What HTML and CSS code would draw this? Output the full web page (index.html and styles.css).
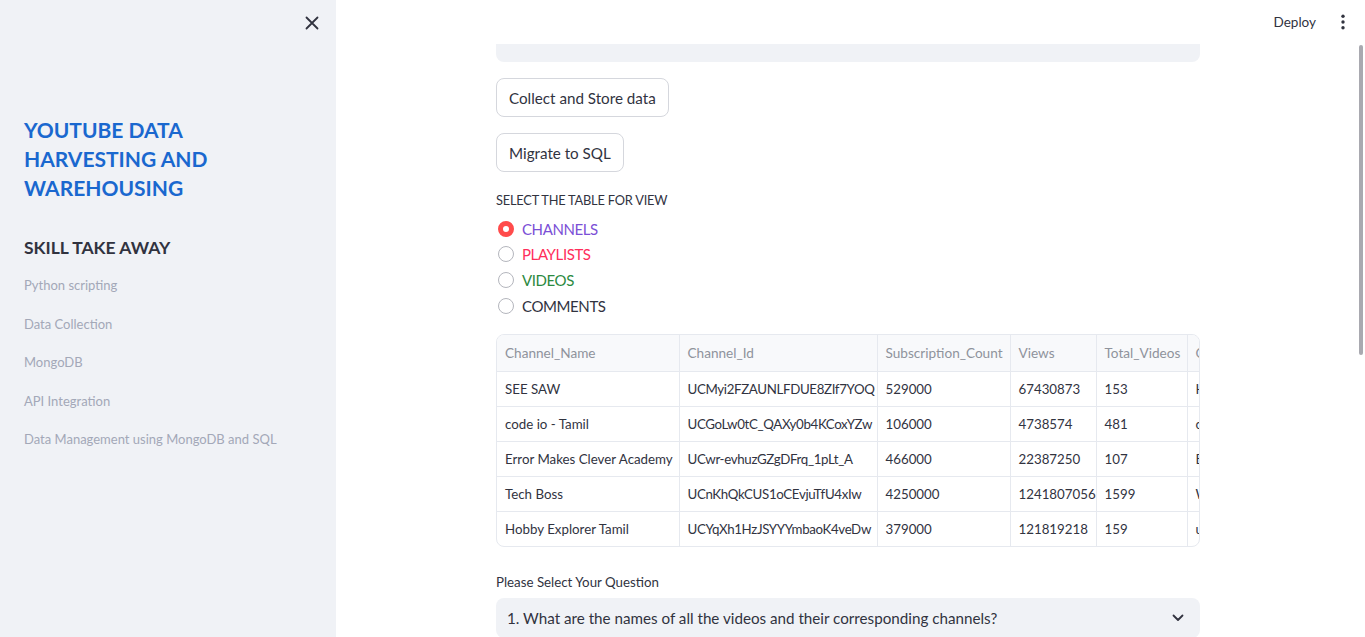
FILE: index.html
```html
<!DOCTYPE html>
<html>
<head>
<meta charset="utf-8">
<link rel="stylesheet" href="styles.css">
</head>
<body>
<aside class="sidebar">
  <div class="side-top">
    <svg class="close" width="14" height="14" viewBox="0 0 14 14"><path d="M1.5 1.5L12.5 12.5M12.5 1.5L1.5 12.5" stroke="#31333f" stroke-width="1.8" stroke-linecap="round"/></svg>
  </div>
  <h1 class="app-title">YOUTUBE DATA HARVESTING AND WAREHOUSING</h1>
  <h2 class="skill">SKILL TAKE AWAY</h2>
  <ul class="skills">
    <li>Python scripting</li>
    <li>Data Collection</li>
    <li>MongoDB</li>
    <li>API Integration</li>
    <li>Data Management using MongoDB and SQL</li>
  </ul>
</aside>
<main class="main">
  <header class="topbar">
    <span class="deploy">Deploy</span>
    <svg class="kebab" width="6" height="16" viewBox="0 0 6 16"><circle cx="3" cy="2.2" r="1.7" fill="#31333f"/><circle cx="3" cy="8" r="1.7" fill="#31333f"/><circle cx="3" cy="13.8" r="1.7" fill="#31333f"/></svg>
  </header>
  <div class="scroll-thumb"></div>
  <div class="content">
    <div class="input-stub"></div>
    <button class="btn">Collect and Store data</button>
    <button class="btn">Migrate to SQL</button>
    <div class="label">SELECT THE TABLE FOR VIEW</div>
    <div class="radios">
      <label class="radio"><span class="dot checked"></span><span class="violet">CHANNELS</span></label>
      <label class="radio"><span class="dot"></span><span class="red">PLAYLISTS</span></label>
      <label class="radio"><span class="dot"></span><span class="green">VIDEOS</span></label>
      <label class="radio"><span class="dot"></span><span>COMMENTS</span></label>
    </div>
    <div class="table-wrap">
      <table class="grid">
        <colgroup>
          <col class="c1"><col class="c2"><col class="c3"><col class="c4"><col class="c5"><col class="c6">
        </colgroup>
        <thead>
          <tr><th>Channel_Name</th><th>Channel_Id</th><th>Subscription_Count</th><th>Views</th><th>Total_Videos</th><th>Channel_Description</th></tr>
        </thead>
        <tbody>
          <tr><td>SEE SAW</td><td class="cid">UCMyi2FZAUNLFDUE8ZIf7YOQ</td><td>529000</td><td>67430873</td><td>153</td><td>Hello friends</td></tr>
          <tr><td>code io - Tamil</td><td class="cid">UCGoLw0tC_QAXy0b4KCoxYZw</td><td>106000</td><td>4738574</td><td>481</td><td>code io</td></tr>
          <tr><td>Error Makes Clever Academy</td><td class="cid">UCwr-evhuzGZgDFrq_1pLt_A</td><td>466000</td><td>22387250</td><td>107</td><td>Error Makes Clever</td></tr>
          <tr><td>Tech Boss</td><td class="cid">UCnKhQkCUS1oCEvjuTfU4xIw</td><td>4250000</td><td>1241807056</td><td>1599</td><td>Welcome</td></tr>
          <tr><td>Hobby Explorer Tamil</td><td class="cid">UCYqXh1HzJSYYYmbaoK4veDw</td><td>379000</td><td>121819218</td><td>159</td><td>unboxing</td></tr>
        </tbody>
      </table>
    </div>
    <div class="label q-label">Please Select Your Question</div>
    <div class="select">
      <span>1. What are the names of all the videos and their corresponding channels?</span>
      <svg width="12" height="8" viewBox="0 0 12 8"><path d="M1.5 1.5L6 6L10.5 1.5" stroke="#31333f" stroke-width="1.8" fill="none" stroke-linecap="round" stroke-linejoin="round"/></svg>
    </div>
  </div>
</main>
</body>
</html>
```
FILE: styles.css
```css
* { box-sizing: border-box; }
html, body { margin: 0; padding: 0; height: 637px; overflow: hidden; }
body {
  display: flex;
  font-family: "Lato", "Noto Sans", sans-serif;
  color: #31333f;
  background: #ffffff;
}
.sidebar {
  width: 336px;
  flex: 0 0 336px;
  height: 637px;
  background: #f0f2f6;
  padding: 0 24px;
}
.side-top {
  height: 46px;
  display: flex;
  justify-content: flex-end;
  align-items: center;
  margin-right: -7px;
}
.close { display: block; }
.app-title {
  margin: 69px 0 0 0;
  font-size: 21px;
  line-height: 29px;
  font-weight: 700;
  color: #1a68cf;
  width: 200px;
}
.skill {
  margin: 34px 0 0 0;
  font-size: 17.5px;
  line-height: 24px;
  font-weight: 700;
  color: #31333f;
}
.skills {
  list-style: none;
  margin: 15px 0 0 0;
  padding: 0;
}
.skills li {
  font-size: 13px;
  line-height: 20px;
  color: #a3a8b8;
  margin-bottom: 18.5px;
}
.main {
  flex: 1;
  position: relative;
  height: 637px;
}
.topbar {
  position: absolute;
  top: 0;
  right: 0;
  height: 44px;
  display: flex;
  align-items: center;
  padding-right: 19px;
  gap: 24px;
}
.deploy { font-size: 13.5px; color: #31333f; }
.kebab { display: block; }
.scroll-thumb {
  position: absolute;
  right: 2px;
  top: 45px;
  width: 4px;
  height: 310px;
  background: #a9a9b0;
  border-radius: 2px;
}
.content {
  margin-left: 160px;
  width: 704px;
  padding-top: 44px;
  display: flex;
  flex-direction: column;
  align-items: flex-start;
}
.input-stub {
  width: 100%;
  height: 18px;
  background: #f0f2f6;
  border-radius: 0 0 8px 8px;
}
.btn {
  margin-top: 16px;
  height: 39px;
  padding: 0 12px;
  font-family: inherit;
  font-size: 15.2px;
  color: #31333f;
  background: #ffffff;
  border: 1px solid #d5d7dd;
  border-radius: 8px;
}
.label {
  margin-top: 18px;
  font-size: 12.8px;
  letter-spacing: -0.2px;
  line-height: 20px;
  color: #31333f;
}
.radios {
  margin-top: 6px;
  display: flex;
  flex-direction: column;
}
.radio {
  display: flex;
  align-items: center;
  height: 25.6px;
  font-size: 15px;
  letter-spacing: -0.4px;
  gap: 8px;
}
.dot {
  width: 16px;
  height: 16px;
  border-radius: 50%;
  border: 1px solid #b4b6bd;
  background: #fff;
  margin-left: 2px;
}
.dot.checked {
  border: 5px solid #ff4b4b;
  background: #ffffff;
}
.violet { color: #7b4fd6; }
.red { color: #ff2e5b; }
.green { color: #2c8a3f; }
.table-wrap {
  margin-top: 16px;
  width: 100%;
  border: 1px solid #e6e9ef;
  border-radius: 8px;
  overflow: hidden;
}
.grid {
  border-collapse: collapse;
  table-layout: fixed;
  width: 900px;
}
.c1 { width: 182px; }
.c2 { width: 198px; }
.c3 { width: 133px; }
.c4 { width: 86px; }
.c5 { width: 91px; }
.c6 { width: 210px; }
.grid th, .grid td {
  height: 35px;
  padding: 0 8px;
  font-size: 13.3px;
  text-align: left;
  white-space: nowrap;
  overflow: hidden;
  border-right: 1px solid #e6e9ef;
  border-bottom: 1px solid #e6e9ef;
}
.grid th {
  height: 36px;
  font-weight: 400;
  font-size: 13.6px;
  color: #8f939c;
  background: #f8f9fb;
}
.grid td { color: #31333f; }
.grid td.cid { letter-spacing: -0.35px; }
.grid tbody tr:last-child td { border-bottom: none; }
.q-label { margin-top: 25px; font-size: 13.3px; letter-spacing: 0; }
.select {
  margin-top: 6px;
  width: 100%;
  height: 40px;
  background: #f0f2f6;
  border-radius: 8px;
  display: flex;
  align-items: center;
  justify-content: space-between;
  padding: 0 16px 0 11px;
  font-size: 15.2px;
}
```
